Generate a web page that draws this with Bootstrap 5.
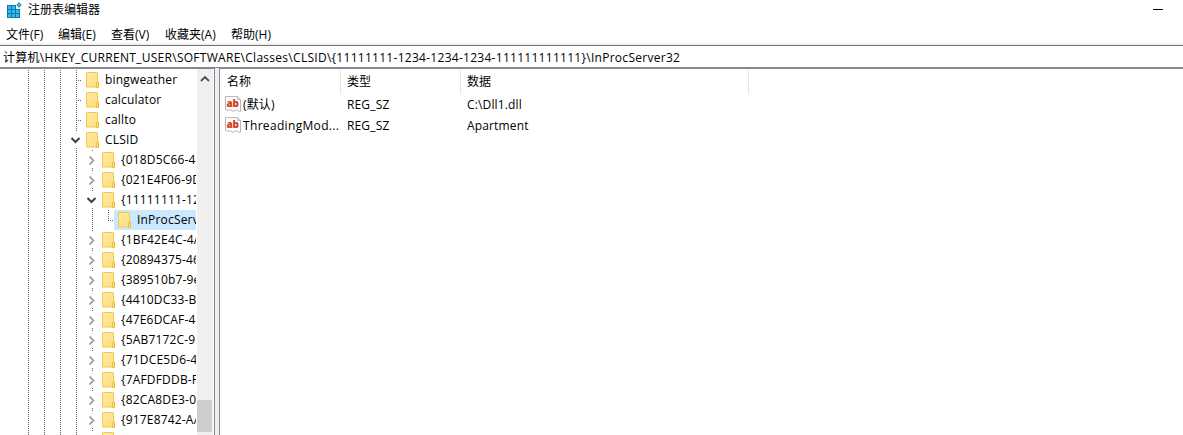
<!DOCTYPE html>
<html lang="zh-CN">
<head>
<meta charset="utf-8">
<title>注册表编辑器</title>
<link href="https://cdn.jsdelivr.net/npm/bootstrap@5.3.0/dist/css/bootstrap.min.css" rel="stylesheet">
<style>
body{font:12px/20px "Open Sans","Noto Sans CJK SC",sans-serif;color:#000;background:#fff;height:435px}
.titlebar,.menubar,.address{flex-shrink:0}
.titlebar{height:24px;padding:0 20px 4px 6px}
.titlebar svg{margin-right:6px}
.min-btn{width:10px;height:1px;background:#000;margin-top:-1px}
.menubar{height:21px;padding:1px 6px 0}
.menubar span{white-space:nowrap}
.address{height:24px;border-top:1px solid #6f6f6f;border-bottom:2px solid #828790;box-shadow:0 -2px #f0f0f0;padding-left:3px;line-height:23px;white-space:nowrap;letter-spacing:.28px}
.tree{width:197px;padding:1px 1px 0 20px}
.node{height:20px;white-space:nowrap}
.guide{width:16px;flex:none;position:relative;background:repeating-linear-gradient(#666 0 1px,#fff 1px 2px) 8px 0/1px 100% no-repeat}
.knot{width:14px}
.leaf::after{content:"";position:absolute;left:10px;top:10px;width:4px;height:1px;background:repeating-linear-gradient(90deg,#666 0 1px,#fff 1px 2px)}
.half{background-size:1px 11px}
.fork svg{position:absolute;left:2px;top:2px;background:#fff}
.folder{margin:0 6px 0 4px;flex:none}
.tag{flex:1 1 0;min-width:0;overflow:hidden;letter-spacing:.18px}
.picked{background:#cce8ff}
.scroll{width:16px;background:#f0f0f0}
.thumb{height:32px;background:#cdcdcd;margin:0 1px 3px 0}
.arrow{margin:6px 0 0 3px}
.splitter{width:6px;background:#f0f0f0;border-left:1px solid #828790;border-right:1px solid #828790;margin-left:1px;margin-top:-1px}
.cell0{width:121px}.cell1{width:120px}.cell3{width:288px}
.heads>div{height:25px;padding:3px 0 0 6px;border-right:1px solid #e5e5e5}
.heads>.cell0{padding-left:7px}
.entry{height:21px;letter-spacing:.15px}
.entry>div{padding-left:6px;white-space:nowrap;line-height:21px}
.entry>.cell0{padding-left:5px}
.entry .glyph{margin:-1px 2px 0 0;flex:none}
</style>
</head>
<body class="d-flex flex-column overflow-hidden">
<svg width="0" height="0" class="position-absolute"><defs>
<linearGradient id="fg" x2="1" y2="1"><stop stop-color="#ffeba6"/><stop offset="1" stop-color="#ffdc7c"/></linearGradient>
<symbol id="folder" viewBox="0 0 13 16"><path d="M.5 .5h11v14.500H.5z" fill="url(#fg)" stroke="#efca4c"/><path d="M10.500 15.500V11l2-1v5.500z" fill="#ffe492" stroke="#e9be36"/></symbol>
<symbol id="closed" viewBox="0 0 12 16"><path d="M3.500 4.500l4 4-4 4" fill="none" stroke="#a6a6a6" stroke-width="1.900"/></symbol>
<symbol id="open" viewBox="0 0 12 16"><path d="M1.500 6l4 4 4-4" fill="none" stroke="#404040" stroke-width="2"/></symbol>
<symbol id="ab" viewBox="0 0 16 16"><path d="M.5 .5h12l3 3v12l-2-.5-1.500-1.500-3 1.500-2 0-2-1.500-2 1-2.500-1z" fill="#fff" stroke="#b8b8b8"/><path d="M12.500 .5v3h3" fill="none" stroke="#b8b8b8"/><text x="1.500" y="10.500" font-family="Open Sans,sans-serif" font-size="10" font-weight="800" fill="#d2421f" letter-spacing="-.3">ab</text></symbol>
</defs></svg>
<header class="titlebar d-flex align-items-center">
<svg width="16" height="16" viewBox="0 0 16 16"><path d="M1 3h9v4h4v9H1z" fill="#0c78ad"/><path d="M2 4h3v3H2zM6 4h3v3H6zM2 8h3v3H2zM6 8h3v3H6zM10 8h3v3h-3zM2 12h3v3H2zM6 12h3v3H6zM10 12h3v3h-3z" fill="#35b9ee"/><path d="M13 .3l2.700 2.700L13 5.700 10.300 3z" fill="#1588bd"/><path d="M13 1.700l1.300 1.300L13 4.300 11.700 3z" fill="#6bd5f5"/></svg>
<span>注册表编辑器</span><span class="min-btn ms-auto"></span>
</header>
<nav class="menubar d-flex"><span style="width:52px">文件(F)</span><span style="width:53px">编辑(E)</span><span style="width:54px">查看(V)</span><span style="width:66px">收藏夹(A)</span><span>帮助(H)</span></nav>
<div class="address">计算机\HKEY_CURRENT_USER\SOFTWARE\Classes\CLSID\{11111111-1234-1234-1234-111111111111}\InProcServer32</div>
<main class="d-flex flex-grow-1" style="min-height:0">
<div class="tree overflow-hidden" id="tree"></div>
<div class="scroll d-flex flex-column justify-content-between"><svg class="arrow" width="10" height="8"><path d="M1 6l4-4 4 4" fill="none" stroke="#505050" stroke-width="1.800"/></svg><div class="thumb"></div></div>
<div class="splitter"></div>
<section class="flex-grow-1">
<div class="heads d-flex"><div class="cell0">名称</div><div class="cell1">类型</div><div class="cell3">数据</div></div>
<div class="entry d-flex"><div class="cell0 d-flex align-items-center"><svg width="16" height="16" class="glyph"><use href="#ab"/></svg><span>(默认)</span></div><div class="cell1">REG_SZ</div><div>C:\Dll1.dll</div></div>
<div class="entry d-flex"><div class="cell0 d-flex align-items-center"><svg width="16" height="16" class="glyph"><use href="#ab"/></svg><span style="letter-spacing:.33px">ThreadingMod...</span></div><div class="cell1">REG_SZ</div><div>Apartment</div></div>
</section>
</main>
<script>
const nodes=[[1,'bingweather','leaf'],[1,'calculator','leaf'],[1,'callto','leaf'],[1,'CLSID','open'],[2,'{018D5C66-4','closed'],[2,'{021E4F06-9D','closed'],[2,'{11111111-12','open'],[3,'InProcServ','leaf half'],[2,'{1BF42E4C-4A','closed'],[2,'{20894375-46','closed'],[2,'{389510b7-9e','closed'],[2,'{4410DC33-B','closed'],[2,'{47E6DCAF-4','closed'],[2,'{5AB7172C-9','closed'],[2,'{71DCE5D6-4','closed'],[2,'{7AFDFDDB-F','closed'],[2,'{82CA8DE3-0','closed'],[2,'{917E8742-AA','closed'],[2,'','closed']];
document.getElementById('tree').innerHTML=nodes.map(([level,name,kind])=>{
  const fork=kind==='open'||kind==='closed';
  return `<div class="node d-flex">${'<div class="guide"></div>'.repeat(level+2)}<div class="guide knot ${fork?'fork':kind}">${fork?`<svg width="12" height="16"><use href="#${kind}"/></svg>`:''}</div><div class="tag d-flex align-items-center ${level===3?'picked':''}"><svg class="folder" width="13" height="16"><use href="#folder"/></svg><span>${name}</span></div></div>`;
}).join('');
</script>
<script src="https://cdn.jsdelivr.net/npm/bootstrap@5.3.0/dist/js/bootstrap.bundle.min.js"></script>
</body>
</html>
